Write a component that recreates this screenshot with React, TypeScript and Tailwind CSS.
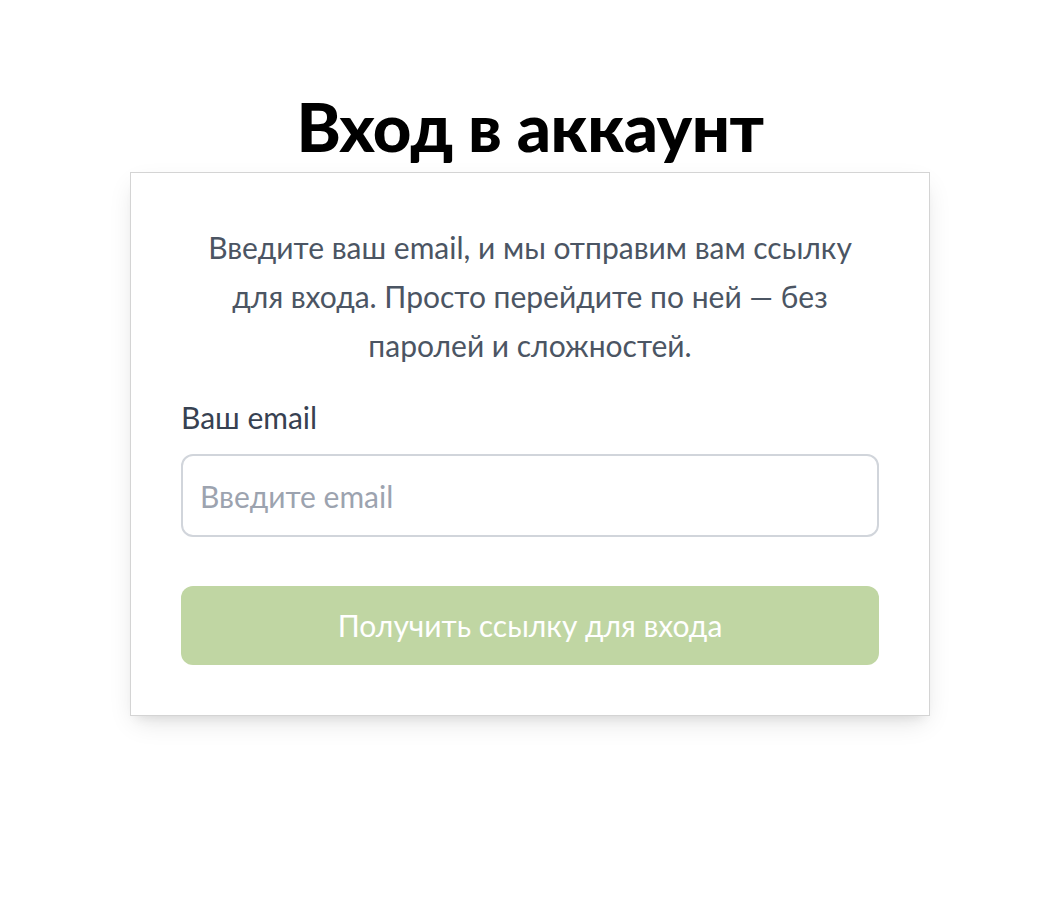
export default function App() {
  return (
    <div className="min-h-[906px] w-full bg-white flex flex-col items-center pt-[80px] font-['Lato','Noto_Sans',sans-serif]">
      <h1 className="text-[67px] leading-[92px] font-black text-black tracking-[-0.5px]">Вход в аккаунт</h1>
      <div className="w-[800px] border border-[#d4d4d4] bg-white shadow-[0_10px_25px_-5px_rgba(0,0,0,0.12),0_8px_10px_-6px_rgba(0,0,0,0.08)] px-[50px] pt-[50px] pb-[50px]">
        <p className="text-center text-[30px] leading-[49px] text-[#4b5563]">
          Введите ваш email, и мы отправим вам ссылку<br />для входа. Просто перейдите по ней — без<br />паролей и сложностей.
        </p>
        <label className="block mt-[27px] text-[30px] leading-[40px] text-[#374151]">Ваш email</label>
        <input
          type="email"
          placeholder="Введите email"
          className="mt-[17px] block w-full h-[83px] rounded-[12px] border-2 border-[#d1d5db] px-[17px] text-[30px] text-[#374151] placeholder:text-[#9ca3af] outline-none"
        />
        <button className="mt-[49px] w-full h-[79px] rounded-[12px] bg-[#c0d6a3] text-white text-[30px]">
          Получить ссылку для входа
        </button>
      </div>
    </div>
  );
}
